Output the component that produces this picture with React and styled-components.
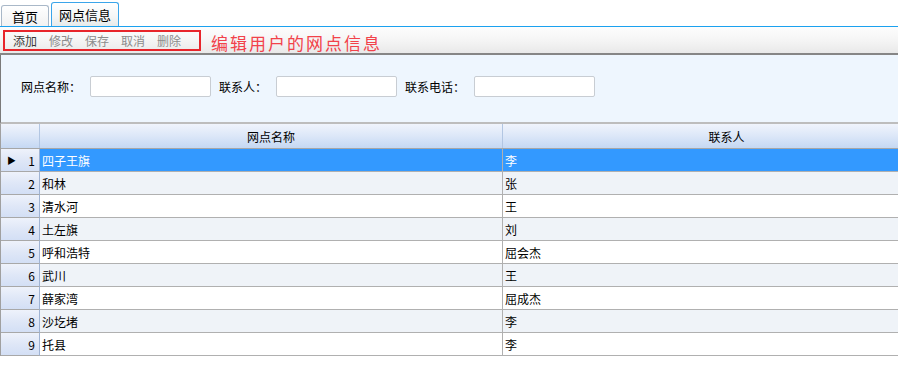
import React from 'react';
import styled, { createGlobalStyle } from 'styled-components';

const GlobalStyle = createGlobalStyle`
  body {
    margin: 0;
    background: #ffffff;
    font-family: "Noto Sans CJK SC", "Liberation Sans", sans-serif;
    font-size: 12px;
    color: #000;
  }
`;

const rows = [
  { name: '四子王旗', contact: '李' },
  { name: '和林', contact: '张' },
  { name: '清水河', contact: '王' },
  { name: '土左旗', contact: '刘' },
  { name: '呼和浩特', contact: '屈会杰' },
  { name: '武川', contact: '王' },
  { name: '薛家湾', contact: '屈成杰' },
  { name: '沙圪堵', contact: '李' },
  { name: '托县', contact: '李' },
];

const App = () => {
  const selected = 0;
  return (
    <Page>
      <GlobalStyle />
      <TabBar>
        <Tab>首页</Tab>
        <Tab active>网点信息</Tab>
      </TabBar>
      <Toolbar>
        <ButtonGroup>
          <ToolButton enabled>添加</ToolButton>
          <ToolButton>修改</ToolButton>
          <ToolButton>保存</ToolButton>
          <ToolButton>取消</ToolButton>
          <ToolButton>删除</ToolButton>
        </ButtonGroup>
        <Note>编辑用户的网点信息</Note>
      </Toolbar>
      <FormPanel>
        <Label>网点名称：</Label>
        <Input />
        <Label>联系人：</Label>
        <Input />
        <Label>联系电话：</Label>
        <Input />
      </FormPanel>
      <Grid>
        <HeaderRow>
          <Corner />
          <HeadCell>网点名称</HeadCell>
          <HeadCell>联系人</HeadCell>
        </HeaderRow>
        {rows.map((r, i) => (
          <Row key={i}>
            <RowHead>
              {i === selected && <Arrow>▶</Arrow>}
              {i + 1}
            </RowHead>
            <Cell selected={i === selected} alt={i % 2 === 1}>{r.name}</Cell>
            <Cell selected={i === selected} alt={i % 2 === 1}>{r.contact}</Cell>
          </Row>
        ))}
      </Grid>
    </Page>
  );
};

const Page = styled.div`
  width: 898px;
  height: 388px;
  overflow: hidden;
`;

const TabBar = styled.div`
  display: flex;
  align-items: flex-end;
  gap: 2px;
  height: 26px;
  padding-left: 1px;
  border-bottom: 1px solid #1ba1ef;
`;

const Tab = styled.div`
  box-sizing: border-box;
  height: ${p => (p.active ? '24px' : '21px')};
  padding: 0 ${p => (p.active ? '7px' : '10px')};
  display: flex;
  align-items: center;
  border: 1px solid ${p => (p.active ? '#3aa5ea' : '#a9b8c8')};
  border-bottom: none;
  border-radius: 3px 3px 0 0;
  background: ${p => (p.active
    ? 'linear-gradient(#ffffff, #f4f6f6 60%, #e6eaea)'
    : 'linear-gradient(#ffffff, #f2f2f2)')};
  font-size: 13px;
  color: #000;
`;

const Toolbar = styled.div`
  height: 26px;
  display: flex;
  align-items: center;
  padding-left: 3px;
  background: linear-gradient(#fdfdfd, #f5f5f5 50%, #e9e9e9);
  border-bottom: 2px solid #868686;
`;

const ButtonGroup = styled.div`
  box-sizing: border-box;
  width: 198px;
  height: 21px;
  display: flex;
  align-items: center;
  gap: 12px;
  padding-left: 8px;
  border: 2px solid #e8252b;
`;

const ToolButton = styled.span`
  font-size: 12px;
  color: ${p => (p.enabled ? '#3a3a3a' : '#8c8c8c')};
`;

const Note = styled.span`
  margin-left: 10px;
  margin-top: 5px;
  font-size: 17px;
  color: #f2424a;
  letter-spacing: 2px;
`;

const FormPanel = styled.div`
  box-sizing: border-box;
  height: 69px;
  display: flex;
  align-items: center;
  padding: 0 0 4px 20px;
  background: #eef6fe;
  border-left: 1px solid #7a7a7a;
  border-bottom: 2px solid #bdbdbd;
`;

const Label = styled.span`
  font-size: 12px;
  margin-right: 9px;
`;

const Input = styled.input`
  box-sizing: border-box;
  width: 121px;
  height: 21px;
  margin-right: 8px;
  border: 1px solid #c8cdd3;
  border-radius: 2px;
  background: #ffffff;
  outline: none;
`;

const Grid = styled.div`
  border-left: 1px solid #a0a0a0;
`;

const HeaderRow = styled.div`
  display: grid;
  grid-template-columns: 39px 463px 448px;
  height: 24px;
  background: linear-gradient(#f0f4fc, #dce7f8 50%, #c5d8f3);
  border-bottom: 1px solid #a6a6a6;
`;

const Corner = styled.div`
  border-right: 1px solid #b2c6e2;
`;

const HeadCell = styled.div`
  display: flex;
  align-items: center;
  justify-content: center;
  border-right: 1px solid #b2c6e2;
  font-size: 12px;
`;

const Row = styled.div`
  display: grid;
  grid-template-columns: 39px 463px 448px;
  height: 23px;
`;

const RowHead = styled.div`
  position: relative;
  display: flex;
  align-items: center;
  justify-content: flex-end;
  padding-right: 4px;
  font-size: 12px;
  background: linear-gradient(#eef2fb, #dfe7f7 50%, #d3dff5);
  border-right: 1px solid #9fb3d3;
  border-bottom: 1px solid #a8a8a8;
`;

const Arrow = styled.span`
  position: absolute;
  left: 6px;
  top: 5px;
  font-size: 9px;
`;

const Cell = styled.div`
  display: flex;
  align-items: center;
  padding-left: 2px;
  font-size: 12px;
  color: ${p => (p.selected ? '#ffffff' : '#000000')};
  background: ${p => (p.selected ? '#3399ff' : p.alt ? '#eff3f8' : '#ffffff')};
  border-right: 1px solid #b0b0b0;
  border-bottom: 1px solid #b0b0b0;
`;

export default App;
